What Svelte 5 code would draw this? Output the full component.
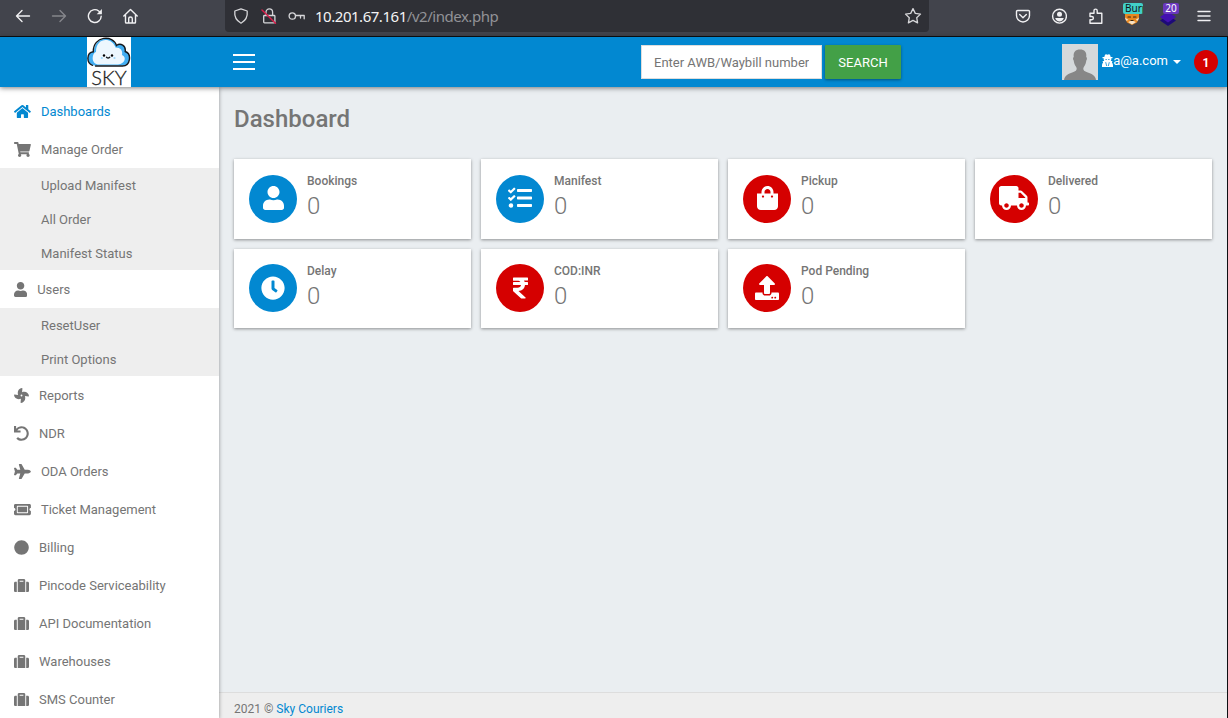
<script>
  const icons = {
    home: {
      w: 576,
      d: "M280.37 148.26L96 300.11V464a16 16 0 0 0 16 16l112.06-.29a16 16 0 0 0 15.92-16V368a16 16 0 0 1 16-16h64a16 16 0 0 1 16 16v95.64a16 16 0 0 0 16 16.05L464 480a16 16 0 0 0 16-16V300L295.67 148.26a12.19 12.19 0 0 0-15.3 0zM571.6 251.47L488 182.56V44.05a12 12 0 0 0-12-12h-56a12 12 0 0 0-12 12v72.61L318.47 43a48 48 0 0 0-61 0L4.34 251.47a12 12 0 0 0-1.6 16.9l25.5 31A12 12 0 0 0 45.15 301l235.22-193.74a12.19 12.19 0 0 1 15.3 0L530.9 301a12 12 0 0 0 16.9-1.6l25.5-31a12 12 0 0 0-1.7-16.93z",
    },
    cart: {
      w: 576,
      d: "M528.12 301.319l47.273-208C578.806 78.301 567.391 64 551.99 64H159.208l-9.166-44.81C147.758 8.021 137.93 0 126.529 0H24C10.745 0 0 10.745 0 24v16c0 13.255 10.745 24 24 24h69.883l70.248 343.435C147.325 417.1 136 435.222 136 456c0 30.928 25.072 56 56 56s56-25.072 56-56c0-15.674-6.447-29.835-16.824-40h209.647C430.447 426.165 424 440.326 424 456c0 30.928 25.072 56 56 56s56-25.072 56-56c0-22.172-12.888-41.332-31.579-50.405l5.517-24.276c3.413-15.018-8.002-29.319-23.403-29.319H218.117l-6.545-32h293.145c11.206 0 20.92-7.754 23.403-18.681z",
    },
    user: {
      w: 448,
      d: "M224 256c70.7 0 128-57.3 128-128S294.7 0 224 0 96 57.3 96 128s57.3 128 128 128zm89.6 32h-16.7c-22.2 10.2-46.9 16-72.9 16s-50.6-5.8-72.9-16h-16.7C60.2 288 0 348.2 0 422.4V464c0 26.5 21.5 48 48 48h352c26.5 0 48-21.5 48-48v-41.6c0-74.2-60.2-134.4-134.4-134.4z",
    },
    fan: {
      w: 512,
      d: "M352.57 128c-28.09 0-54.09 4.52-77.06 12.86l12.41-123.11C289 7.31 279.81-1.18 269.33.13 189.63 10.13 128 77.64 128 159.43c0 28.09 4.52 54.09 12.86 77.06L17.75 224.08C7.31 223-1.18 232.19.13 242.67c10 79.7 77.51 141.33 159.3 141.33 28.09 0 54.09-4.52 77.06-12.86l-12.41 123.11c-1.05 10.43 8.11 18.93 18.59 17.62 79.7-10 141.33-77.51 141.33-159.3 0-28.09-4.52-54.09-12.86-77.06l123.11 12.41c10.44 1.05 18.93-8.11 17.62-18.59-10-79.7-77.51-141.33-159.3-141.33zM256 288a32 32 0 1 1 32-32 32 32 0 0 1-32 32z",
    },
    undo: {
      w: 512,
      d: "M212.333 224.333H12c-6.627 0-12-5.373-12-12V12C0 5.373 5.373 0 12 0h48c6.627 0 12 5.373 12 12v78.112C117.773 39.279 184.26 7.47 258.175 8.007c136.906.994 246.448 111.623 246.157 248.532C504.041 393.258 393.12 504 256.333 504c-64.089 0-122.496-24.313-166.51-64.215-5.099-4.622-5.334-12.554-.467-17.42l33.967-33.967c4.474-4.474 11.662-4.717 16.401-.525C170.76 415.336 211.58 432 256.333 432c97.268 0 176-78.716 176-176 0-97.267-78.716-176-176-176-58.496 0-110.28 28.476-142.274 72.333h98.274c6.627 0 12 5.373 12 12v48c0 6.627-5.373 12-12 12z",
    },
    plane: {
      w: 576,
      d: "M480 192H365.71L260.61 8.06A16.014 16.014 0 0 0 246.71 0h-65.5c-10.63 0-18.3 10.17-15.38 20.39L214.86 192H112l-43.2-57.6c-3.02-4.03-7.77-6.4-12.8-6.4H16.01C5.6 128-2.04 137.78.49 147.88L32 256 .49 364.12C-2.04 374.22 5.6 384 16.01 384H56c5.04 0 9.78-2.37 12.8-6.4L112 320h102.86l-49.03 171.6c-2.92 10.22 4.75 20.4 15.38 20.4h65.5c5.74 0 11.04-3.08 13.89-8.06L365.71 320H480c35.35 0 96-28.65 96-64s-60.65-64-96-64z",
    },
    ticket: {
      w: 576,
      d: "M128 160h320v192H128V160zm400 96c0 26.51 21.49 48 48 48v96c0 26.51-21.49 48-48 48H48c-26.51 0-48-21.49-48-48v-96c26.51 0 48-21.49 48-48s-21.49-48-48-48v-96c0-26.51 21.49-48 48-48h480c26.51 0 48 21.49 48 48v96c-26.51 0-48 21.49-48 48zm-48-104c0-13.255-10.745-24-24-24H120c-13.255 0-24 10.745-24 24v208c0 13.255 10.745 24 24 24h336c13.255 0 24-10.745 24-24V152z",
    },
    circle: {
      w: 512,
      d: "M256 8C119 8 8 119 8 256s111 248 248 248 248-111 248-248S393 8 256 8z",
    },
    suitcase: {
      w: 512,
      d: "M128 480h256V80c0-26.5-21.5-48-48-48H176c-26.5 0-48 21.5-48 48v400zm64-384h128v32H192V96zm320 80v256c0 26.5-21.5 48-48 48h-48V128h48c26.5 0 48 21.5 48 48zM96 480H48c-26.5 0-48-21.5-48-48V176c0-26.5 21.5-48 48-48h48v352z",
    },
    tasks: {
      w: 512,
      d: "M139.61 35.5a12 12 0 0 0-17 0L58.93 98.81l-22.7-22.12a12 12 0 0 0-17 0L3.53 92.41a12 12 0 0 0 0 17l47.59 47.4a12.78 12.78 0 0 0 17.61 0l15.59-15.62L156.52 69a12.09 12.09 0 0 0 .09-17zm0 159.19a12 12 0 0 0-17 0l-63.68 63.72-22.7-22.1a12 12 0 0 0-17 0L3.53 252a12 12 0 0 0 0 17L51 316.5a12.77 12.77 0 0 0 17.6 0l15.7-15.69 72.2-72.22a12 12 0 0 0 .09-16.9zM64 368c-26.49 0-48.59 21.5-48.59 48S37.53 464 64 464a48 48 0 0 0 0-96zm432 16H208a16 16 0 0 0-16 16v32a16 16 0 0 0 16 16h288a16 16 0 0 0 16-16v-32a16 16 0 0 0-16-16zm0-320H208a16 16 0 0 0-16 16v32a16 16 0 0 0 16 16h288a16 16 0 0 0 16-16V80a16 16 0 0 0-16-16zm0 160H208a16 16 0 0 0-16 16v32a16 16 0 0 0 16 16h288a16 16 0 0 0 16-16v-32a16 16 0 0 0-16-16z",
    },
    bag: {
      w: 448,
      d: "M352 160v-32C352 57.42 294.579 0 224 0 153.42 0 96 57.42 96 128v32H0v272c0 44.183 35.817 80 80 80h288c44.183 0 80-35.817 80-80V160h-96zm-192-32c0-35.29 28.71-64 64-64s64 28.71 64 64v32H160v-32zm160 120c-13.255 0-24-10.745-24-24s10.745-24 24-24 24 10.745 24 24-10.745 24-24 24zm-192 0c-13.255 0-24-10.745-24-24s10.745-24 24-24 24 10.745 24 24-10.745 24-24 24z",
    },
    truck: {
      w: 640,
      d: "M624 352h-16V243.9c0-12.7-5.1-24.9-14.1-33.9L494 110.1c-9-9-21.2-14.1-33.9-14.1H416V48c0-26.5-21.5-48-48-48H48C21.5 0 0 21.5 0 48v320c0 26.5 21.5 48 48 48h16c0 53 43 96 96 96s96-43 96-96h128c0 53 43 96 96 96s96-43 96-96h48c8.8 0 16-7.2 16-16v-32c0-8.8-7.2-16-16-16zM160 464c-26.5 0-48-21.5-48-48s21.5-48 48-48 48 21.5 48 48-21.5 48-48 48zm320 0c-26.5 0-48-21.5-48-48s21.5-48 48-48 48 21.5 48 48-21.5 48-48 48zm80-208H416V144h44.1l99.9 99.9V256z",
    },
    clock: {
      w: 512,
      d: "M256,8C119,8,8,119,8,256S119,504,256,504,504,393,504,256,393,8,256,8Zm92.49,313h0l-20,25a16,16,0,0,1-22.49,2.5h0l-67-49.72a40,40,0,0,1-15-31.23V112a16,16,0,0,1,16-16h32a16,16,0,0,1,16,16V256l58,42.5A16,16,0,0,1,348.49,321Z",
    },
    rupee: {
      w: 320,
      d: "M308 96c6.627 0 12-5.373 12-12V44c0-6.627-5.373-12-12-12H12C5.373 32 0 37.373 0 44v44.748c0 6.627 5.373 12 12 12h85.28c27.308 0 48.261 9.958 60.97 27.252H12c-6.627 0-12 5.373-12 12v40c0 6.627 5.373 12 12 12h158.757c-6.217 36.086-32.294 58.632-74.757 58.632H12c-6.627 0-12 5.373-12 12v53.012c0 3.349 1.4 6.546 3.861 8.818l165.052 152.356a12.001 12.001 0 0 0 8.139 3.182h82.562c10.924 0 16.166-13.408 8.139-20.818L116.871 319.906c76.499-2.34 131.144-53.395 138.318-127.906H308c6.627 0 12-5.373 12-12v-40c0-6.627-5.373-12-12-12h-58.69c-3.486-11.541-8.28-22.246-14.252-32H308z",
    },
    upload: {
      w: 512,
      d: "M296 384h-80c-13.3 0-24-10.7-24-24V192h-87.7c-17.8 0-26.7-21.5-14.1-34.1L242.3 5.7c7.5-7.5 19.8-7.5 27.3 0l152.2 152.2c12.6 12.6 3.7 34.1-14.1 34.1H320v168c0 13.3-10.7 24-24 24zm216-8v112c0 13.3-10.7 24-24 24H24c-13.3 0-24-10.7-24-24V376c0-13.3 10.7-24 24-24h136v8c0 30.9 25.1 56 56 56h80c30.9 0 56-25.1 56-56v-8h136c13.3 0 24 10.7 24 24zm-124 88c0-11-9-20-20-20s-20 9-20 20 9 20 20 20 20-9 20-20zm64 0c0-11-9-20-20-20s-20 9-20 20 9 20 20 20 20-9 20-20z",
    },
  };

  const menu = [
    { label: "Dashboards", icon: "home", active: true },
    {
      label: "Manage Order",
      icon: "cart",
      children: ["Upload Manifest", "All Order", "Manifest Status"],
    },
    { label: "Users", icon: "user", children: ["ResetUser", "Print Options"] },
    { label: "Reports", icon: "fan" },
    { label: "NDR", icon: "undo" },
    { label: "ODA Orders", icon: "plane" },
    { label: "Ticket Management", icon: "ticket" },
    { label: "Billing", icon: "circle" },
    { label: "Pincode Serviceability", icon: "suitcase" },
    { label: "API Documentation", icon: "suitcase" },
    { label: "Warehouses", icon: "suitcase" },
    { label: "SMS Counter", icon: "suitcase" },
  ];

  const cards = [
    { label: "Bookings", value: 0, icon: "user", color: "blue" },
    { label: "Manifest", value: 0, icon: "tasks", color: "blue" },
    { label: "Pickup", value: 0, icon: "bag", color: "red" },
    { label: "Delivered", value: 0, icon: "truck", color: "red" },
    { label: "Delay", value: 0, icon: "clock", color: "blue" },
    { label: "COD:INR", value: 0, icon: "rupee", color: "red" },
    { label: "Pod Pending", value: 0, icon: "upload", color: "red" },
  ];
</script>

{#snippet icon(name, size)}
  <svg
    class="fa"
    width={(icons[name].w / 512) * size}
    height={size}
    viewBox="0 0 {icons[name].w} 512"
  >
    <path fill="currentColor" d={icons[name].d} />
  </svg>
{/snippet}

<div class="window">
  <div class="browser">
    <div class="nav-buttons">
      <svg width="16" height="16" viewBox="0 0 16 16">
        <path d="M14.5 8H1.5M7 2.5L1.5 8L7 13.5" />
      </svg>
      <svg class="dim" width="16" height="16" viewBox="0 0 16 16">
        <path d="M1.5 8h13M9 2.5L14.5 8L9 13.5" />
      </svg>
      <svg width="16" height="16" viewBox="0 0 16 16">
        <path d="M14.2 8.2A6.4 6.4 0 1 1 11.7 3L13.6 4.7" />
        <path class="solid" d="M14.9 1v5.2H9.7z" />
      </svg>
      <svg width="16" height="16" viewBox="0 0 16 16">
        <path d="M.8 8L7.500 1.400L14.200 8M2.500 7v7.200a.8.8 0 0 0 .8.8h8.400a.8.8 0 0 0 .8-.8V7M5.700 15v-4.200a1.800 1.800 0 0 1 3.600 0V15" />
      </svg>
    </div>

    <div class="url-bar">
      <svg width="16" height="16" viewBox="0 0 16 16">
        <path d="M8 .8L14.2 3c.6 5.6-1.3 9.5-6.2 12.2C3.1 12.500 1.200 8.600 1.800 3z" />
      </svg>
      <svg width="16" height="16" viewBox="0 0 16 16">
        <path d="M5 7V4.200a3.300 3.300 0 0 1 6.600 0V7M3.500 7.500h9.600a.8.8 0 0 1 .8.800v5.800a.8.8 0 0 1-.8.800H3.500a.8.8 0 0 1-.8-.8V8.300a.8.8 0 0 1 .8-.8z" />
        <path class="slash" d="M1 2L14.500 15.300" />
      </svg>
      <svg class="key" width="17" height="16" viewBox="0 0 17 16">
        <circle cx="4.300" cy="8" r="3.200" />
        <path d="M7.500 7.500h8.700v3.300M12.500 7.500v2.600" />
      </svg>
      <span class="url"><b>10.201.67.161</b>/v2/index.php</span>
      <svg class="star" width="18" height="18" viewBox="0 0 18 18">
        <path d="M9 1.600l2.300 4.800 5.200.7-3.800 3.600.9 5.200L9 13.400l-4.600 2.500.9-5.200L1.500 7.100l5.200-.7z" />
      </svg>
    </div>

    <div class="tools">
      <svg width="16" height="16" viewBox="0 0 16 16">
        <path d="M2.600 2.500h10.800a1.100 1.100 0 0 1 1.100 1.100v3.900a6.500 6.500 0 0 1-13 0V3.600a1.100 1.100 0 0 1 1.100-1.100zM4.700 6.500L8 9.700l3.300-3.200" />
      </svg>
      <svg width="16" height="16" viewBox="0 0 16 16">
        <circle cx="8.500" cy="8.200" r="6.900" />
        <circle class="solid" cx="8.500" cy="6.200" r="2.500" />
        <path class="solid" d="M4.200 10h8.600c-.6 2.300-2.300 3.500-4.300 3.500S4.800 12.300 4.200 10z" />
      </svg>
      <svg width="17" height="16" viewBox="0 0 17 16">
        <path d="M3 15.200V11.700h1.800a1.500 1.500 0 0 0 0-3.200H3V5.200h4V2.700a1.600 1.600 0 0 1 3.200 0v2.500h4.600v10z" />
      </svg>
      <div class="extension">
        <svg width="18" height="18" viewBox="0 0 18 18">
          <path class="fox" d="M2 4h14v6l-2 4.500L9 17l-5-2.500L2 10z" />
          <path class="cream" d="M2 9.500l3.500 2.500-2.500.8zM16 9.500l-3.500 2.500 2.500.8zM5 14l4-1.500 4 1.500-4 2.500z" />
          <path class="mark" d="M5 9h2.500M10.500 9H13M8 12.500h2" />
        </svg>
        <span class="badge teal">Burp</span>
      </div>
      <div class="extension">
        <svg width="18" height="18" viewBox="0 0 18 18">
          <path class="layer-low" d="M1 12.500L9 7l8 5.500L9 18z" />
          <path class="layer-top" d="M1 9L9 3.500 17 9l-8 5.500z" />
        </svg>
        <span class="badge purple">20</span>
      </div>
      <svg width="16" height="16" viewBox="0 0 16 16">
        <path d="M2 3.500h12M2 8h12M2 12.500h12" />
      </svg>
    </div>
  </div>

  <div class="page">
    <header class="topbar">
      <div class="brand">
        <div class="logo">
          <svg width="44" height="31" viewBox="0 0 44 31">
            <path class="cloud-shade" d="M8 28.500C-1.500 27-1 15.500 7 14.500 7-1 27-2 29.500 9c4-3 9.500 0 9 5C45 17 43.500 28 35.500 28.500z" />
            <path class="cloud-face" d="M13 27.500C3 28 5 16 9 15 9 0 25 0 28.500 10.500c5 0 7.500 3 6.500 7.500C40 20 38 27 31 27.500z" />
            <path class="cloud-line" d="M5.500 28.300C-1 26-.5 15.500 6.300 14.800 6-1.500 26.500-2.500 29.500 8.500c4-3 9.500 0 8.700 6C45 17 43.500 28.800 35.500 29H8.500" />
            <circle cx="17" cy="18.500" r="1.200" />
            <circle cx="25" cy="18.500" r="1.200" />
            <path class="smile" d="M19.500 20.300q1.600 1.500 3.200 0" />
            <circle class="cheek" cx="14.800" cy="21" r="1.100" />
            <circle class="cheek" cx="27.500" cy="21" r="1.100" />
          </svg>
          <span>SKY</span>
        </div>
      </div>
      <div class="burger"><i></i><i></i><i></i></div>
      <form class="search">
        <input type="text" placeholder="Enter AWB/Waybill number" />
        <button type="button">SEARCH</button>
      </form>
      <div class="account">
        <svg class="avatar" width="36" height="36" viewBox="0 0 36 36">
          <path d="M2 36c.5-4.500 4-6 10.500-8.500 2.300-.9 2.700-3 1.700-4.500-1.500-2-2.200-4-2.500-6.500-1-1.500-.8-3 .1-3.500C11 8 13.500 5.500 18 5.500s7 2.500 6.200 7.500c.9.500 1.100 2 .1 3.500-.3 2.500-1 4.500-2.500 6.500-1 1.500-.6 3.600 1.700 4.500C30 30 33.500 31.500 34 36z" />
        </svg>
        <svg class="secret" width="11" height="13" viewBox="0 0 11 13">
          <path d="M3 .8Q3.800-.2 5.500.7 7.200-.2 8 .8L8.700 3H10.500v1.200H9.300v1.500L8.800 7H10.500L9.900 8.500Q11 9.500 11 11.200V13H0V11.200Q0 9.500 1.100 8.500L.5 7H2.200L1.700 5.700V4.200H.5V3h1.800z" />
          <path class="tie" d="M3.700 8.200l1 3.800M7.300 8.200l-1 3.800M3.500 5.500h1.300M6.200 5.500h1.300" />
        </svg>
        <span class="mail">a@a.com</span>
        <i class="caret"></i>
        <span class="count">1</span>
      </div>
    </header>

    <div class="body">
      <aside class="sidebar">
        {#each menu as item}
          <div class="item" class:active={item.active}>
            {@render icon(item.icon, 15)}
            <span>{item.label}</span>
          </div>
          {#if item.children}
            <div class="submenu">
              {#each item.children as child}
                <div class="subitem">{child}</div>
              {/each}
            </div>
          {/if}
        {/each}
      </aside>

      <div class="content">
        <main>
          <h1>Dashboard</h1>
          <div class="cards">
            {#each cards as card}
              <div class="card">
                <div class="disc {card.color}">{@render icon(card.icon, 24)}</div>
                <div class="info">
                  <div class="label">{card.label}</div>
                  <div class="value">{card.value}</div>
                </div>
              </div>
            {/each}
          </div>
        </main>
        <footer>2021 © <span>Sky Couriers</span></footer>
      </div>
    </div>
  </div>
</div>

<style>
  :global(body) {
    margin: 0;
    overflow: hidden;
  }

  .window {
    display: flex;
    flex-direction: column;
    width: 1228px;
    height: 718px;
    box-sizing: border-box;
    overflow: hidden;
    background: #0e1013;
    font-family: Roboto, "Liberation Sans", sans-serif;
    color: #757575;
  }

  svg {
    display: block;
    flex: none;
  }

  /* browser chrome */
  .browser {
    display: flex;
    align-items: flex-start;
    height: 36px;
    flex: none;
    margin-bottom: 1px;
    background: #42444c;
  }

  .browser svg {
    fill: none;
    stroke: #f0f0f2;
    stroke-width: 1.4;
    stroke-linejoin: round;
    stroke-linecap: round;
  }

  .browser .dim {
    stroke: #85868b;
  }

  .browser .solid {
    fill: #f0f0f2;
    stroke: none;
  }

  .nav-buttons {
    display: flex;
    gap: 20px;
    width: 210px;
    padding: 8px 0 0 15px;
    box-sizing: border-box;
    margin-right: 15px;
  }

  .url-bar {
    display: flex;
    align-items: center;
    width: 704px;
    height: 32px;
    padding: 0 7px 0 8px;
    box-sizing: border-box;
    gap: 12px;
    border-radius: 0 0 4px 4px;
    background: #2f3036;
  }

  .url-bar svg {
    stroke: #d6d6d9;
    stroke-width: 1.3;
  }

  .url-bar .key {
    margin: 0 1px 0 -1px;
  }

  .browser .slash {
    stroke: #d81e4a;
    stroke-width: 1.5;
  }

  .url {
    flex: 1;
    margin-left: -3px;
    font: 15px/32px "Noto Sans", sans-serif;
    letter-spacing: -0.47px;
    color: #929297;
  }

  .url b {
    font-weight: 400;
    color: #f4f4f5;
  }

  .tools {
    display: flex;
    align-items: center;
    gap: 20px;
    padding: 8px 0 0 86px;
  }

  .extension {
    position: relative;
    width: 16px;
    height: 16px;
  }

  .extension svg {
    stroke: none;
    margin-left: -1px;
  }

  .extension .fox {
    fill: #e8871e;
  }

  .extension .cream {
    fill: #f6e3c8;
  }

  .extension .mark {
    stroke: #3a2410;
    stroke-width: 1.2;
  }

  .extension .layer-low {
    fill: #1d0a78;
  }

  .extension .layer-top {
    fill: #4310b0;
  }

  .badge {
    position: absolute;
    top: -5px;
    width: 20px;
    height: 11px;
    border-radius: 2px;
    font: 10px/11px "Noto Sans", sans-serif;
    text-align: center;
  }

  .teal {
    left: -1px;
    overflow: hidden;
    background: #42cfc8;
    color: #101418;
    text-align: left;
    text-indent: 2px;
  }

  .purple {
    left: 3px;
    width: 16px;
    background: #6a38bd;
    color: #fff;
  }

  /* page */
  .page {
    display: flex;
    flex-direction: column;
    flex: 1;
    min-height: 0;
    margin-right: 1px;
    background: #eaeef1;
  }

  .topbar {
    position: relative;
    z-index: 2;
    display: flex;
    height: 50px;
    flex: none;
    background: #0288d1;
    box-shadow: 0 1px 5px rgba(0, 0, 0, 0.5);
  }

  .brand {
    display: flex;
    justify-content: center;
    width: 218px;
    margin-right: 15px;
  }

  .logo {
    display: flex;
    flex-direction: column;
    align-items: center;
    width: 44px;
    height: 50px;
    overflow: hidden;
    background: #fff;
  }

  .logo span {
    font: 300 20px/19px Lato, sans-serif;
    color: #222;
    -webkit-text-stroke: 0.3px #222;
  }

  .cloud-shade {
    fill: #42aef2;
  }

  .cloud-face {
    fill: #edf7fe;
  }

  .cloud-line,
  .smile {
    fill: none;
    stroke: #15181c;
    stroke-width: 1.4;
    stroke-linecap: round;
  }

  .cheek {
    fill: #9fd7fa;
  }

  .burger {
    display: flex;
    flex-direction: column;
    gap: 5px;
    width: 22px;
    padding-top: 17px;
  }

  .burger i {
    height: 2px;
    background: #fff;
  }

  .search {
    display: flex;
    gap: 3px;
    margin: 8px 0 0 386px;
  }

  .search input {
    width: 181px;
    height: 34px;
    box-sizing: border-box;
    padding: 0 12px;
    border: 1px solid #ddd;
    border-radius: 0;
    background: #fff;
    font: 13px Roboto, sans-serif;
  }

  .search input::placeholder {
    color: #757575;
    opacity: 1;
  }

  .search button {
    width: 76px;
    height: 34px;
    padding: 0;
    border: 0;
    border-radius: 1px;
    background: #43a047;
    box-shadow: 0 1px 3px rgba(0, 0, 0, 0.4);
    font: 13px Roboto, sans-serif;
    color: #fff;
  }

  .account {
    display: flex;
    align-items: center;
    height: 50px;
    margin-left: auto;
    padding-right: 9px;
    color: #fff;
  }

  .avatar {
    margin-right: 4px;
    background: #d5d9db;
    fill: #878787;
  }

  .secret {
    margin-bottom: 3px;
    fill: #fff;
  }

  .tie {
    stroke: #0288d1;
    stroke-width: 0.8;
  }

  .mail {
    margin-bottom: 4px;
    font-size: 13px;
  }

  .caret {
    margin: 0 13px 0 5px;
    border: 4px solid transparent;
    border-top-color: #fff;
    border-bottom: 0;
  }

  .count {
    width: 24px;
    height: 24px;
    border-radius: 50%;
    background: #d50000;
    font: 700 12px/27px Roboto, sans-serif;
    text-align: center;
  }

  .body {
    display: flex;
    flex: 1;
    min-height: 0;
  }

  .sidebar {
    position: relative;
    z-index: 1;
    width: 219px;
    padding-top: 5px;
    box-sizing: border-box;
    background: #fff;
    box-shadow: 0 1px 4px rgba(0, 0, 0, 0.4);
    font-size: 13px;
  }

  .item {
    display: flex;
    align-items: center;
    gap: 10px;
    height: 38px;
    padding-left: 14px;
  }

  .item.active {
    color: #0288d1;
  }

  .submenu {
    background: #eee;
  }

  .subitem {
    height: 34px;
    padding-left: 41px;
    line-height: 35px;
  }

  .content {
    display: flex;
    flex-direction: column;
    flex: 1;
  }

  main {
    flex: 1;
    padding: 0 15px;
  }

  h1 {
    height: 72px;
    margin: 0;
    font-size: 24px;
    font-weight: 500;
    line-height: 64px;
  }

  .cards {
    display: grid;
    grid-template-columns: repeat(4, 237px);
    grid-template-rows: 80px 79px;
    gap: 10px;
  }

  .card {
    display: flex;
    gap: 10px;
    padding: 0 15px;
    background: #fff;
    box-shadow: 0 1px 3px rgba(0, 0, 0, 0.4);
  }

  .disc {
    display: flex;
    align-items: center;
    justify-content: center;
    align-self: center;
    width: 48px;
    height: 48px;
    border-radius: 50%;
    color: #fff;
  }

  .card:nth-child(-n + 4) .fa {
    margin-bottom: 2px;
  }

  .card:nth-child(n + 5) .disc {
    margin-bottom: 1px;
  }

  .blue {
    background: #0288d1;
  }

  .red {
    background: #d50000;
  }

  .label {
    padding-top: 14px;
    font-size: 12px;
    font-weight: 500;
    line-height: 17px;
  }

  .value {
    font-size: 24px;
    font-weight: 300;
    line-height: 32px;
  }

  footer {
    height: 25px;
    padding-left: 15px;
    border-top: 1px solid #ddd;
    background: #eee;
    font-size: 12px;
    line-height: 33px;
    overflow: hidden;
  }

  footer span {
    color: #0288d1;
  }
</style>
